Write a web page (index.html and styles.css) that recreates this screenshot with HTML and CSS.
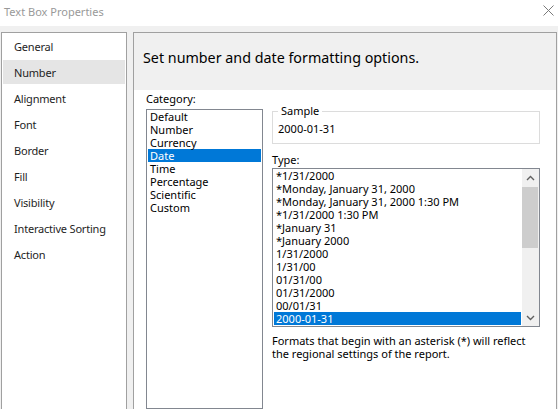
FILE: index.html
```html
<!DOCTYPE html>
<html>
<head>
  <meta charset="utf-8">
  <link rel="stylesheet" href="styles.css">
</head>
<body>
  <div class="titlebar">
    <span class="title">Text Box Properties</span>
    <svg class="close" width="11" height="11" viewBox="0 0 11 11">
      <path d="M0.5 0.5L10.5 10.5M10.5 0.5L0.5 10.5" stroke="#7a7a7a" stroke-width="1" fill="none"/>
    </svg>
  </div>

  <div class="main">
    <ul class="nav">
      <li class="nav-item">General</li>
      <li class="nav-item active">Number</li>
      <li class="nav-item">Alignment</li>
      <li class="nav-item">Font</li>
      <li class="nav-item">Border</li>
      <li class="nav-item">Fill</li>
      <li class="nav-item">Visibility</li>
      <li class="nav-item">Interactive Sorting</li>
      <li class="nav-item">Action</li>
    </ul>

    <div class="panel">
      <div class="panel-head">Set number and date formatting options.</div>
      <div class="content">
        <div class="category">
          <div class="label">Category:</div>
          <ul class="listbox cat-list">
            <li>Default</li>
            <li>Number</li>
            <li>Currency</li>
            <li class="selected">Date</li>
            <li>Time</li>
            <li>Percentage</li>
            <li>Scientific</li>
            <li>Custom</li>
          </ul>
        </div>

        <div class="options">
          <fieldset class="sample">
            <legend>Sample</legend>
            <div class="sample-value">2000-01-31</div>
          </fieldset>

          <div class="label type-label">Type:</div>
          <div class="listbox type-box">
            <ul class="type-list">
              <li>*1/31/2000</li>
              <li>*Monday, January 31, 2000</li>
              <li>*Monday, January 31, 2000 1:30 PM</li>
              <li>*1/31/2000 1:30 PM</li>
              <li>*January 31</li>
              <li>*January 2000</li>
              <li>1/31/2000</li>
              <li>1/31/00</li>
              <li>01/31/00</li>
              <li>01/31/2000</li>
              <li>00/01/31</li>
              <li class="selected">2000-01-31</li>
            </ul>
            <div class="scrollbar">
              <div class="arrow">
                <svg width="9" height="6" viewBox="0 0 9 6"><path d="M1 5L4.5 1.5L8 5" stroke="#606060" stroke-width="1.4" fill="none"/></svg>
              </div>
              <div class="thumb"></div>
              <div class="track"></div>
              <div class="arrow">
                <svg width="9" height="6" viewBox="0 0 9 6"><path d="M1 1L4.5 4.5L8 1" stroke="#606060" stroke-width="1.4" fill="none"/></svg>
              </div>
            </div>
          </div>

          <p class="note">Formats that begin with an asterisk (*) will reflect the regional settings of the report.</p>
        </div>
      </div>
    </div>
  </div>
</body>
</html>
```

FILE: styles.css
```css
html, body {
    height: 100%;
}
body {
    margin: 0;
    overflow: hidden;
    display: flex;
    flex-direction: column;
    font-family: "Noto Sans", "Liberation Sans", sans-serif;
    font-size: 11px;
    color: #000;
    background: #fff;
}
ul {
    list-style: none;
    margin: 0;
    padding: 0;
}

.titlebar {
    height: 26px;
    flex-shrink: 0;
    display: flex;
    align-items: center;
    justify-content: space-between;
    padding: 0 4px 0 4px;
    background: #fff;
}
.title {
    color: #999;
    margin-top: -3px;
}
.close {
    margin-top: -5px;
}

.main {
    flex: 1;
    display: flex;
    gap: 6px;
    padding: 6px 1px 0 1px;
    background: #f0f0f0;
    min-height: 0;
}

.nav {
    width: 122px;
    padding: 1px;
    background: #fff;
    border: 1px solid #a0a0a0;
    border-bottom: none;
}
.nav-item {
    height: 24px;
    line-height: 25px;
    margin-bottom: 2px;
    padding-left: 11px;
    letter-spacing: -0.2px;
    color: #1e1e1e;
}
.nav-item.active {
    background: #e5e5e5;
}

.panel {
    flex: 1;
    display: flex;
    flex-direction: column;
    background: #fff;
    border: 1px solid #a0a0a0;
    border-bottom: none;
}
.panel-head {
    height: 57px;
    padding: 15px 0 0 9px;
    box-sizing: border-box;
    background: #f0f0f0;
    font-size: 14.3px;
    line-height: 20px;
}

.content {
    flex: 1;
    display: grid;
    grid-template-columns: 117px 268px;
    column-gap: 9px;
    padding: 1px 0 0 12px;
}
.label {
    line-height: 16px;
}

.category {
    display: flex;
    flex-direction: column;
}
.listbox {
    border: 1px solid #828790;
    background: #fff;
}
.cat-list {
    flex: 1;
    margin-top: 2px;
}
.cat-list li,
.type-list li {
    height: 13px;
    line-height: 14px;
    margin: 0 1px;
    padding-left: 2px;
    white-space: nowrap;
}
li.selected {
    background: #0078d7;
    color: #fff;
}

.sample {
    margin: 12px 0 0 0;
    padding: 0 5px 6px 5px;
    border: 1px solid #dcdcdc;
}
.sample legend {
    padding: 0 3px;
    line-height: 16px;
}
.sample-value {
    margin-top: 2px;
    line-height: 16px;
}

.type-label {
    margin-top: 8px;
    line-height: 15px;
}
.type-box {
    margin-top: 1px;
    height: 157px;
    display: flex;
}
.type-list {
    flex: 1;
}
.scrollbar {
    width: 17px;
    display: flex;
    flex-direction: column;
    background: #f0f0f0;
}
.arrow {
    height: 17px;
    display: flex;
    align-items: center;
    justify-content: center;
}
.thumb {
    height: 61px;
    margin: 1px 1px 0 0;
    background: #cdcdcd;
}
.track {
    flex: 1;
}

.note {
    margin: 7px 0 0 0;
    line-height: 13px;
}
```
